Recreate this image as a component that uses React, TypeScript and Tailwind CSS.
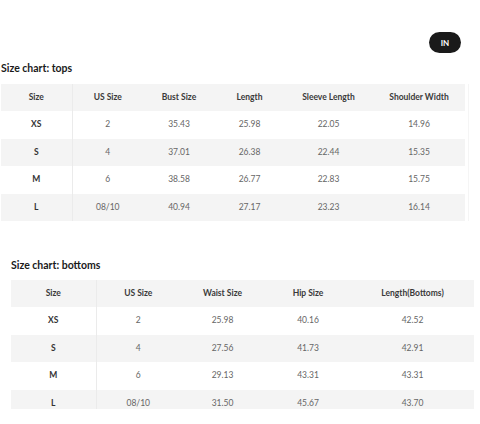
import React from "react";

const TOPS_HEAD = ["Size", "US Size", "Bust Size", "Length", "Sleeve Length", "Shoulder Width"];
const TOPS_COLS = [71, 71, 72, 69, 89, 92];
const TOPS = [
  ["XS", "2", "35.43", "25.98", "22.05", "14.96"],
  ["S", "4", "37.01", "26.38", "22.44", "15.35"],
  ["M", "6", "38.58", "26.77", "22.83", "15.75"],
  ["L", "08/10", "40.94", "27.17", "23.23", "16.14"],
];

const BOTTOMS_HEAD = ["Size", "US Size", "Waist Size", "Hip Size", "Length(Bottoms)"];
const BOTTOMS_COLS = [85, 84, 85, 86, 123];
const BOTTOMS = [
  ["XS", "2", "25.98", "40.16", "42.52"],
  ["S", "4", "27.56", "41.73", "42.91"],
  ["M", "6", "29.13", "43.31", "43.31"],
  ["L", "08/10", "31.50", "45.67", "43.70"],
];

function SizeTable({ head, cols, rows }: { head: string[]; cols: number[]; rows: string[][] }) {
  return (
    <table className="table-fixed border-collapse" style={{ width: cols.reduce((a, b) => a + b, 0) }}>
      <colgroup>
        {cols.map((w, i) => (
          <col key={i} style={{ width: w }} />
        ))}
      </colgroup>
      <thead>
        <tr className="bg-[#f4f4f4] h-[27px]">
          {head.map((h, i) => (
            <th
              key={h}
              className={`p-0 text-center text-[8.5px] font-bold text-[#3a3a3a] ${i === 0 ? "border-r border-[#ebebeb]" : ""}`}
            >
              {h}
            </th>
          ))}
        </tr>
      </thead>
      <tbody>
        {rows.map((r, ri) => (
          <tr key={r[0]} className={`h-[27.5px] ${ri % 2 === 1 ? "bg-[#f4f4f4]" : "bg-white"}`}>
            {r.map((c, i) => (
              <td
                key={i}
                className={`p-0 text-center text-[8.5px] ${
                  i === 0 ? "font-bold text-[#333] border-r border-[#ebebeb]" : "text-[#666]"
                }`}
              >
                {c}
              </td>
            ))}
          </tr>
        ))}
      </tbody>
    </table>
  );
}

export default function App() {
  return (
    <div
      className="w-[480px] h-[424px] overflow-hidden bg-white"
      style={{ fontFamily: "Lato, 'Open Sans', sans-serif" }}
    >
      <div className="flex justify-end pt-[32px] pr-[19px]">
        <div className="w-[32px] h-[21px] rounded-full bg-[#1a1a1a] text-white text-[8px] font-bold flex items-center justify-center">
          IN
        </div>
      </div>

      <h2 className="mt-[8px] ml-[1px] text-[10.5px] font-bold text-[#1a1a1a] leading-[14px]">Size chart: tops</h2>

      <div className="mt-[9px] ml-[1px] w-[468px] border-r border-[#f5f5f5]">
        <SizeTable head={TOPS_HEAD} cols={TOPS_COLS} rows={TOPS} />
      </div>

      <h2 className="mt-[37px] ml-[11px] text-[10.5px] font-bold text-[#1a1a1a] leading-[14px]">Size chart: bottoms</h2>

      <div className="mt-[8px] ml-[11px] h-[129px] overflow-hidden">
        <SizeTable head={BOTTOMS_HEAD} cols={BOTTOMS_COLS} rows={BOTTOMS} />
      </div>
    </div>
  );
}
